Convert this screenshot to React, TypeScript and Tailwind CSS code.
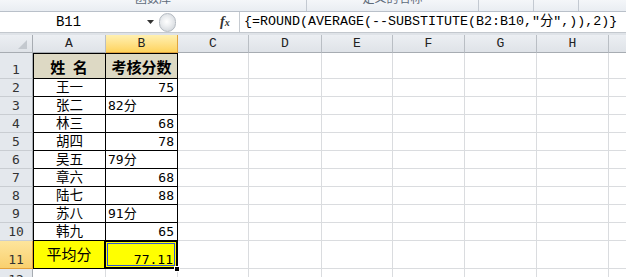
import React from "react";

type Row = {
  n: number;
  a?: string;
  b?: string;
  kind: "head" | "name" | "total" | "empty";
  bAlign?: "right" | "left";
};

const rows: Row[] = [
  { n: 1, a: "姓\u2002名", b: "考核分数", kind: "head" },
  { n: 2, a: "王一", b: "75", kind: "name", bAlign: "right" },
  { n: 3, a: "张二", b: "82分", kind: "name", bAlign: "left" },
  { n: 4, a: "林三", b: "68", kind: "name", bAlign: "right" },
  { n: 5, a: "胡四", b: "78", kind: "name", bAlign: "right" },
  { n: 6, a: "吴五", b: "79分", kind: "name", bAlign: "left" },
  { n: 7, a: "章六", b: "68", kind: "name", bAlign: "right" },
  { n: 8, a: "陆七", b: "88", kind: "name", bAlign: "right" },
  { n: 9, a: "苏八", b: "91分", kind: "name", bAlign: "left" },
  { n: 10, a: "韩九", b: "65", kind: "name", bAlign: "right" },
  { n: 11, a: "平均分", b: "77.11", kind: "total" },
  { n: 12, kind: "empty" },
];

const gridCell = "h-full shrink-0 border-r border-b border-[#dadcdf]";

function EmptyCols() {
  return (
    <>
      <div className={`${gridCell} w-[71px]`} />
      <div className={`${gridCell} w-[73px]`} />
      <div className={`${gridCell} w-[71px]`} />
      <div className={`${gridCell} w-[72px]`} />
      <div className={`${gridCell} w-[72px]`} />
      <div className={`${gridCell} w-[72px]`} />
      <div className="h-full flex-1 border-b border-[#dadcdf]" />
    </>
  );
}

function RowHeader({ n, active, h }: { n: number; active?: boolean; h: string }) {
  return (
    <div
      className={
        active
          ? `${h} w-[33px] shrink-0 flex items-end justify-center border-r border-b border-[#e3a13c] bg-gradient-to-b from-[#fde59c] to-[#f9d06e] font-['DejaVu_Sans_Mono',monospace] text-[13px] leading-[15px] text-[#333] pb-[1px]`
          : `${h} w-[33px] shrink-0 flex items-end justify-center border-r border-r-[#a7acb2] border-b border-b-[#c9cdd2] bg-[#e4e8ed] font-['DejaVu_Sans_Mono',monospace] text-[13px] leading-[15px] text-[#333] pb-[1px]`
      }
    >
      {n}
    </div>
  );
}

function DataRow({ r }: { r: Row }) {
  if (r.kind === "head") {
    return (
      <div className="flex h-[26px]">
        <RowHeader n={r.n} h="h-[26px]" />
        <div className="h-full w-[73px] shrink-0 flex items-center justify-center border-r border-b border-black bg-[#ddd9c4] shadow-[inset_1px_1px_0_#000] font-['Noto_Sans_CJK_SC',sans-serif] font-bold text-[15px] leading-none text-black pt-[1px]">
          {r.a}
        </div>
        <div className="h-full w-[72px] shrink-0 flex items-center justify-center border-r border-b border-black bg-[#ddd9c4] shadow-[inset_0_1px_0_#000] font-['Noto_Sans_CJK_SC',sans-serif] font-bold text-[15px] leading-none text-black pt-[1px]">
          {r.b}
        </div>
        <EmptyCols />
      </div>
    );
  }
  if (r.kind === "name") {
    return (
      <div className="flex h-[18px]">
        <RowHeader n={r.n} h="h-[18px]" />
        <div className="h-full w-[73px] shrink-0 flex items-center justify-center border-r border-b border-black shadow-[inset_1px_0_0_#000] font-['Noto_Sans_CJK_SC',sans-serif] text-[13.5px] leading-[13px] text-black pl-[1px] pb-[3px]">
          {r.a}
        </div>
        {r.bAlign === "right" ? (
          <div className="h-full w-[72px] shrink-0 flex items-end justify-end border-r border-b border-black pr-[3px] pb-[1px] font-['DejaVu_Sans_Mono','Noto_Sans_CJK_SC',monospace] text-[13px] leading-[15px] text-black">
            {r.b}
          </div>
        ) : (
          <div className="h-full w-[72px] shrink-0 flex items-end justify-start border-r border-b border-black pl-[2px] pb-[1px] font-['DejaVu_Sans_Mono','Noto_Sans_CJK_SC',monospace] text-[13px] leading-[15px] text-black">
            {r.b}
          </div>
        )}
        <EmptyCols />
      </div>
    );
  }
  if (r.kind === "total") {
    return (
      <div className="flex h-[28px]">
        <RowHeader n={r.n} active h="h-[28px]" />
        <div className="h-full w-[73px] shrink-0 flex items-center justify-center border-r border-b border-black bg-[#ffff00] shadow-[inset_1px_0_0_#000] font-['Noto_Sans_CJK_SC',sans-serif] text-[15px] leading-none text-black pb-[3px]">
          {r.a}
        </div>
        <div className="relative h-full w-[72px] shrink-0 flex items-end justify-end border-r border-b border-black bg-[#ffff00] pr-[4px] pb-[1px] font-['DejaVu_Sans_Mono',monospace] text-[13px] leading-[15px] text-black">
          {r.b}
          <div className="absolute -left-[2px] -top-[1px] -right-[1px] -bottom-[1px] border-2 border-black">
            <div className="absolute inset-[1px] border border-[#2f55d4]" />
          </div>
          <div className="absolute -right-[3px] -bottom-[4px] w-[6px] h-[6px] bg-black border border-white" />
        </div>
        <EmptyCols />
      </div>
    );
  }
  return (
    <div className="flex h-[20px]">
      <RowHeader n={r.n} h="h-[20px]" />
      <div className={`${gridCell} w-[73px]`} />
      <div className={`${gridCell} w-[72px]`} />
      <EmptyCols />
    </div>
  );
}

export default function App() {
  return (
    <div className="w-[626px] h-[277px] overflow-hidden bg-white flex flex-col select-none">
      {/* ribbon bottom strip */}
      <div className="h-[12px] shrink-0 flex border-b border-[#b9c0c9] bg-gradient-to-b from-[#f4f6f9] to-[#e9edf2] overflow-hidden">
        <div className="w-[307px] h-full border-r border-[#c3c9d1] flex justify-center overflow-hidden">
          <span className="-mt-[8px] font-['Noto_Sans_CJK_SC',sans-serif] text-[12px] leading-[12px] text-[#5e6b7a]">函数库</span>
        </div>
        <div className="w-[172px] h-full border-r border-[#c3c9d1] flex justify-center overflow-hidden">
          <span className="-mt-[8px] font-['Noto_Sans_CJK_SC',sans-serif] text-[12px] leading-[12px] text-[#5e6b7a]">定义的名称</span>
        </div>
        <div className="w-[55px] h-full border-r border-[#c3c9d1]" />
        <div className="w-[45px] h-full border-r border-[#c3c9d1]" />
        <div className="flex-1 h-full" />
      </div>

      {/* formula bar */}
      <div className="h-[21px] shrink-0 flex items-center bg-white border-b border-[#c3c8ce]">
        <div className="w-[137px] shrink-0 text-center font-['Liberation_Mono',monospace] text-[14px] leading-none text-black">B11</div>
        <div className="w-[20px] shrink-0 flex justify-start pl-[10px]">
          <svg width="7" height="4" viewBox="0 0 7 4">
            <path d="M0 0 H7 L3.5 4 Z" fill="#333" />
          </svg>
        </div>
        <div className="w-[17px] h-[19px] shrink-0 rounded-full border border-[#b4bac1] bg-[radial-gradient(circle_at_45%_45%,#ffffff_0%,#eef0f2_35%,#c9ced4_100%)] ml-[2px]" />
        <div className="w-[44px] shrink-0" />
        <div className="w-[14px] shrink-0 font-['Liberation_Serif',serif] italic font-bold text-[14px] leading-none text-[#333] flex items-baseline">
          <span>f</span>
          <span className="text-[10px]">x</span>
        </div>
        <div className="w-[5px] shrink-0" />
        <div className="w-[1px] h-full shrink-0 bg-[#c6cbd1]" />
        <div className="pl-[4px] whitespace-nowrap font-['Liberation_Mono','Noto_Sans_CJK_SC',monospace] text-[13.33px] leading-none text-black">
          {'{=ROUND(AVERAGE(--SUBSTITUTE(B2:B10,"分",)),2)}'}
        </div>
      </div>

      {/* gap band */}
      <div className="h-[2px] shrink-0 bg-[#dfe3e8]" />

      {/* column headers */}
      <div className="h-[18px] shrink-0 flex font-['Liberation_Mono',monospace] text-[13px] leading-none text-[#222]">
        <div className="w-[33px] h-full shrink-0 flex items-end justify-end border-r border-b border-[#a7acb2] bg-gradient-to-b from-[#eceff3] to-[#dfe3e8] pr-[5px] pb-[3px]">
          <svg width="9" height="9" viewBox="0 0 9 9">
            <path d="M9 0 V9 H0 Z" fill="#c4c9cf" />
          </svg>
        </div>
        <div className="w-[73px] h-full shrink-0 flex items-center justify-center border-r border-r-[#b9bec4] border-b border-b-[#a7acb2] bg-gradient-to-b from-[#eceff3] to-[#dfe3e8]">A</div>
        <div className="w-[72px] h-full shrink-0 flex items-center justify-center border-r border-b border-[#e0a43e] bg-gradient-to-b from-[#fff0b0] to-[#fed35c]">B</div>
        <div className="w-[71px] h-full shrink-0 flex items-center justify-center border-r border-r-[#b9bec4] border-b border-b-[#a7acb2] bg-gradient-to-b from-[#eceff3] to-[#dfe3e8]">C</div>
        <div className="w-[73px] h-full shrink-0 flex items-center justify-center border-r border-r-[#b9bec4] border-b border-b-[#a7acb2] bg-gradient-to-b from-[#eceff3] to-[#dfe3e8]">D</div>
        <div className="w-[71px] h-full shrink-0 flex items-center justify-center border-r border-r-[#b9bec4] border-b border-b-[#a7acb2] bg-gradient-to-b from-[#eceff3] to-[#dfe3e8]">E</div>
        <div className="w-[72px] h-full shrink-0 flex items-center justify-center border-r border-r-[#b9bec4] border-b border-b-[#a7acb2] bg-gradient-to-b from-[#eceff3] to-[#dfe3e8]">F</div>
        <div className="w-[72px] h-full shrink-0 flex items-center justify-center border-r border-r-[#b9bec4] border-b border-b-[#a7acb2] bg-gradient-to-b from-[#eceff3] to-[#dfe3e8]">G</div>
        <div className="w-[72px] h-full shrink-0 flex items-center justify-center border-r border-r-[#b9bec4] border-b border-b-[#a7acb2] bg-gradient-to-b from-[#eceff3] to-[#dfe3e8]">H</div>
        <div className="flex-1 h-full border-b border-[#a7acb2] bg-gradient-to-b from-[#eceff3] to-[#dfe3e8]" />
      </div>

      {rows.map((r) => (
        <DataRow key={r.n} r={r} />
      ))}
    </div>
  );
}
